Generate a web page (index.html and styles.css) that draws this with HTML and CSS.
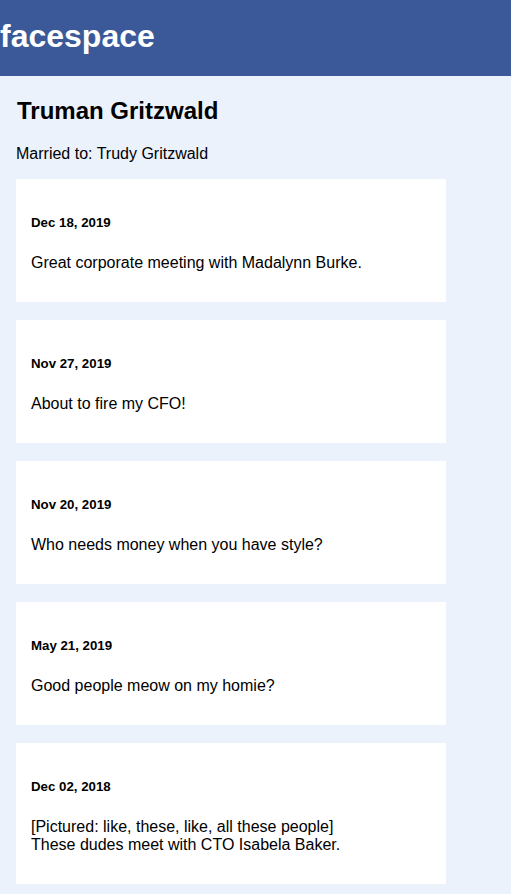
FILE: index.html
```html
<!DOCTYPE html>
<html lang="en">
<head>
<meta charset="utf-8">
<title>facespace</title>
<link rel="stylesheet" href="styles.css">
</head>
<body>
<header class="topbar">
  <h1 class="brand">facespace</h1>
</header>
<main class="profile">
  <h2 class="name">Truman Gritzwald</h2>
  <p class="spouse">Married to: Trudy Gritzwald</p>
  <section class="feed">
    <article class="post">
      <h5 class="date">Dec 18, 2019</h5>
      <p class="text">Great corporate meeting with Madalynn Burke.</p>
    </article>
    <article class="post">
      <h5 class="date">Nov 27, 2019</h5>
      <p class="text">About to fire my CFO!</p>
    </article>
    <article class="post">
      <h5 class="date">Nov 20, 2019</h5>
      <p class="text">Who needs money when you have style?</p>
    </article>
    <article class="post">
      <h5 class="date">May 21, 2019</h5>
      <p class="text">Good people meow on my homie?</p>
    </article>
    <article class="post">
      <h5 class="date">Dec 02, 2018</h5>
      <p class="text">[Pictured: like, these, like, all these people]<br>These dudes meet with CTO Isabela Baker.</p>
    </article>
  </section>
</main>
</body>
</html>
```

FILE: styles.css
```css
html, body {
  margin: 0;
  padding: 0;
}
body {
  background: #ebf2fc;
  font-family: "Liberation Sans", Arial, sans-serif;
  color: #000;
  overflow: hidden;
}
.topbar {
  background: #3b5998;
  height: 76px;
  box-sizing: border-box;
  padding-top: 18px;
}
.brand {
  margin: 0;
  font-size: 32px;
  font-weight: bold;
  color: #fff;
}
.profile {
  padding: 0 16px;
}
.name {
  font-size: 24px;
  margin: 21px 0 20px;
  padding-left: 1px;
}
.spouse {
  font-size: 16px;
  margin: 16px 0;
}
.feed {
  display: flex;
  flex-direction: column;
  gap: 18px;
}
.post {
  background: #fff;
  width: 430px;
  box-sizing: border-box;
  padding: 14px 15px;
}
.date {
  font-size: 13.28px;
  font-weight: bold;
  margin: 22px 0 24px;
}
.text {
  font-size: 16px;
  margin: 0 0 16px;
}
```
